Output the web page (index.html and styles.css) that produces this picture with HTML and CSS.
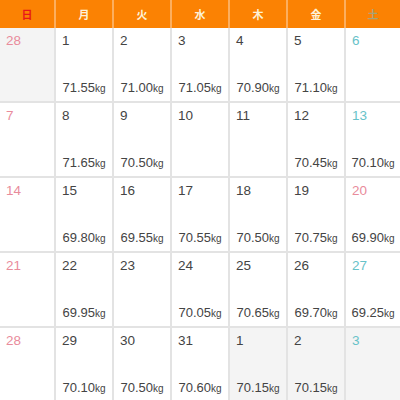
FILE: index.html
```html
<!DOCTYPE html>
<html lang="ja">
<head>
<meta charset="utf-8">
<link rel="stylesheet" href="styles.css">
</head>
<body>
<div class="cal">
  <div class="head sun">日</div>
  <div class="head">月</div>
  <div class="head">火</div>
  <div class="head">水</div>
  <div class="head">木</div>
  <div class="head">金</div>
  <div class="head sat">土</div>

  <div class="cell other"><span class="d sun">28</span></div>
  <div class="cell"><span class="d">1</span><span class="w">71.55<small>kg</small></span></div>
  <div class="cell"><span class="d">2</span><span class="w">71.00<small>kg</small></span></div>
  <div class="cell"><span class="d">3</span><span class="w">71.05<small>kg</small></span></div>
  <div class="cell"><span class="d">4</span><span class="w">70.90<small>kg</small></span></div>
  <div class="cell"><span class="d">5</span><span class="w">71.10<small>kg</small></span></div>
  <div class="cell"><span class="d sat">6</span></div>

  <div class="cell"><span class="d sun">7</span></div>
  <div class="cell"><span class="d">8</span><span class="w">71.65<small>kg</small></span></div>
  <div class="cell"><span class="d">9</span><span class="w">70.50<small>kg</small></span></div>
  <div class="cell"><span class="d">10</span></div>
  <div class="cell"><span class="d">11</span></div>
  <div class="cell"><span class="d">12</span><span class="w">70.45<small>kg</small></span></div>
  <div class="cell"><span class="d sat">13</span><span class="w">70.10<small>kg</small></span></div>

  <div class="cell"><span class="d sun">14</span></div>
  <div class="cell"><span class="d">15</span><span class="w">69.80<small>kg</small></span></div>
  <div class="cell"><span class="d">16</span><span class="w">69.55<small>kg</small></span></div>
  <div class="cell"><span class="d">17</span><span class="w">70.55<small>kg</small></span></div>
  <div class="cell"><span class="d">18</span><span class="w">70.50<small>kg</small></span></div>
  <div class="cell"><span class="d">19</span><span class="w">70.75<small>kg</small></span></div>
  <div class="cell"><span class="d sun">20</span><span class="w">69.90<small>kg</small></span></div>

  <div class="cell"><span class="d sun">21</span></div>
  <div class="cell"><span class="d">22</span><span class="w">69.95<small>kg</small></span></div>
  <div class="cell"><span class="d">23</span></div>
  <div class="cell"><span class="d">24</span><span class="w">70.05<small>kg</small></span></div>
  <div class="cell"><span class="d">25</span><span class="w">70.65<small>kg</small></span></div>
  <div class="cell"><span class="d">26</span><span class="w">69.70<small>kg</small></span></div>
  <div class="cell"><span class="d sat">27</span><span class="w">69.25<small>kg</small></span></div>

  <div class="cell"><span class="d sun">28</span></div>
  <div class="cell"><span class="d">29</span><span class="w">70.10<small>kg</small></span></div>
  <div class="cell"><span class="d">30</span><span class="w">70.50<small>kg</small></span></div>
  <div class="cell"><span class="d">31</span><span class="w">70.60<small>kg</small></span></div>
  <div class="cell other"><span class="d">1</span><span class="w">70.15<small>kg</small></span></div>
  <div class="cell other"><span class="d">2</span><span class="w">70.15<small>kg</small></span></div>
  <div class="cell other"><span class="d sat">3</span></div>
</div>
</body>
</html>
```

FILE: styles.css
```css
html, body {
  margin: 0;
  padding: 0;
  background: #fff;
  overflow: hidden;
}
.cal {
  display: grid;
  grid-template-columns: 56px repeat(5, 58px) 54px;
  grid-template-rows: 28px repeat(5, 75px);
  font-family: "Liberation Sans", Arial, "Noto Sans CJK JP", sans-serif;
  color: #444;
}
.head {
  background: #fb8203;
  color: #fdf1d8;
  font-family: "Noto Sans CJK JP", sans-serif;
  font-size: 11px;
  font-weight: bold;
  display: flex;
  align-items: center;
  justify-content: center;
  border-right: 2px solid #fcae5e;
  box-sizing: border-box;
}
.head:last-child { border-right: none; }
.head.sun { color: #e8161a; }
.head.sat { color: #a7a377; }
.head:nth-child(7) { border-right: none; color: #a7a377; }
.cell {
  display: flex;
  flex-direction: column;
  box-sizing: border-box;
  border-right: 2px solid #e3e3e3;
  border-bottom: 2px solid #e3e3e3;
  padding: 5px 0 4px 6px;
}
.cell:nth-child(7n) { border-right: none; }
.cell.other { background: #f4f4f4; }
.d {
  font-size: 13.5px;
  line-height: 16px;
}
.d.sun { color: #e98b9b; }
.d.sat { color: #67c2c8; }
.w {
  margin-top: auto;
  margin-left: -6px;
  text-align: center;
  font-size: 13px;
  line-height: 16px;
}
.w small {
  font-size: 10px;
}
```
